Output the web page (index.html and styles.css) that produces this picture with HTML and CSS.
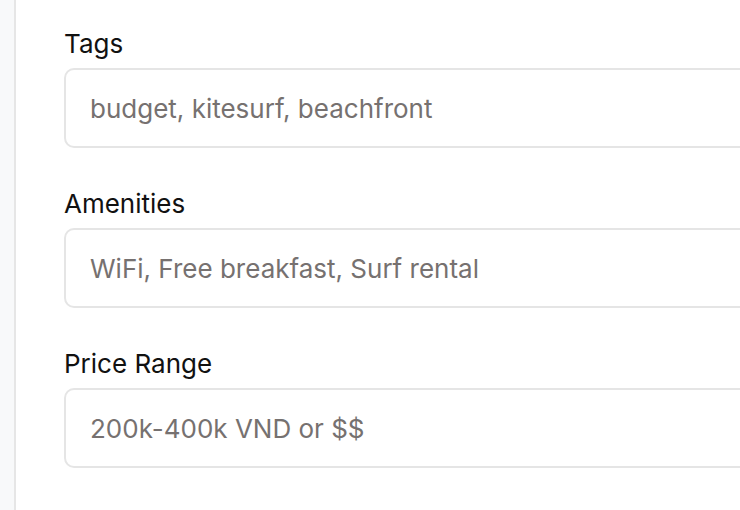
FILE: index.html
```html
<!DOCTYPE html>
<html lang="en">
<head>
<meta charset="utf-8">
<link rel="stylesheet" href="styles.css">
</head>
<body>
<div class="layout">
  <aside class="sidebar"></aside>
  <main class="content">
    <div class="field">
      <label class="label" for="tags">Tags</label>
      <input class="input" id="tags" type="text" placeholder="budget, kitesurf, beachfront">
    </div>
    <div class="field">
      <label class="label" for="amenities">Amenities</label>
      <input class="input" id="amenities" type="text" placeholder="WiFi, Free breakfast, Surf rental">
    </div>
    <div class="field">
      <label class="label" for="price">Price Range</label>
      <input class="input" id="price" type="text" placeholder="200k-400k VND or $$">
    </div>
  </main>
</div>
</body>
</html>
```
FILE: styles.css
```css
html, body {
  margin: 0;
  padding: 0;
  background: #ffffff;
  overflow: hidden;
}
.layout {
  display: flex;
  height: 510px;
}
.sidebar {
  width: 14px;
  flex: none;
  background: #f8f9fa;
  border-right: 2px solid #e6e6e6;
}
.content {
  flex: 1;
  min-width: 0;
  overflow: hidden;
  padding: 28px 0 0 48px;
  display: flex;
  flex-direction: column;
  gap: 40px;
  font-family: "Inter", sans-serif;
}
.field {
  display: flex;
  flex-direction: column;
  gap: 8px;
}
.label {
  font-size: 26px;
  line-height: 32px;
  color: #111111;
}
.input {
  box-sizing: border-box;
  width: calc(100% + 40px);
  height: 80px;
  border: 2px solid #e5e5e5;
  border-radius: 10px;
  padding: 0 24px;
  font-family: "Inter", sans-serif;
  font-size: 26px;
  color: #111;
  background: #fff;
  outline: none;
}
.input::placeholder {
  color: #767170;
  opacity: 1;
}
```
